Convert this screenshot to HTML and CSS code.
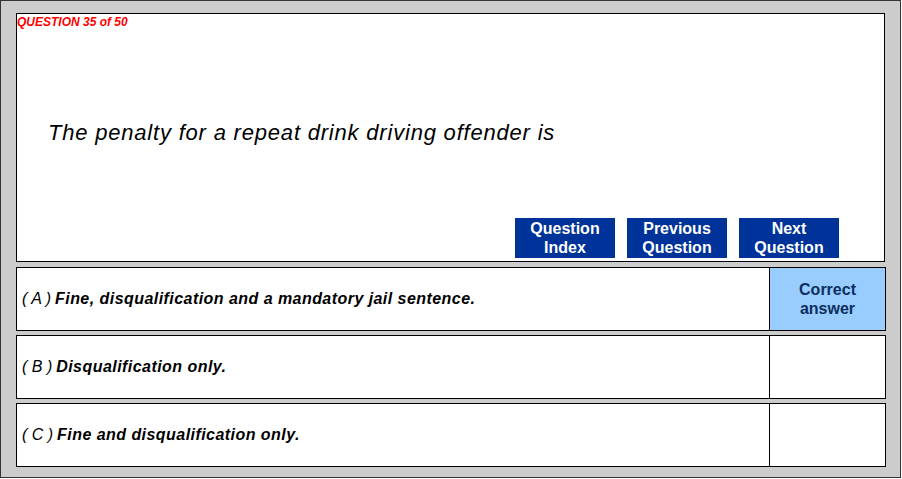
FILE: index.html
```html
<!DOCTYPE html>
<html lang="en">
<head>
    <meta charset="UTF-8">
    <title>Question 35 of 50</title>
    <link rel="stylesheet" href="styles.css">
</head>
<body>
    <div class="frame">
        <div class="question-box">
            <div class="counter">QUESTION 35 of 50</div>
            <div class="question">The penalty for a repeat drink driving offender is</div>
            <div class="nav">
                <button class="nav-btn">Question<br>Index</button>
                <button class="nav-btn">Previous<br>Question</button>
                <button class="nav-btn">Next<br>Question</button>
            </div>
        </div>

        <div class="option">
            <div class="option-text"><span class="letter">( A )</span> Fine, disqualification and a mandatory jail sentence.</div>
            <div class="option-mark correct">Correct<br>answer</div>
        </div>
        <div class="option">
            <div class="option-text"><span class="letter">( B )</span> Disqualification only.</div>
            <div class="option-mark"></div>
        </div>
        <div class="option">
            <div class="option-text"><span class="letter">( C )</span> Fine and disqualification only.</div>
            <div class="option-mark"></div>
        </div>
    </div>
</body>
</html>
```

FILE: styles.css
```css
body {
    margin: 0;
    font-family: "Liberation Sans", Arial, sans-serif;
    background: #ffffff;
}
.frame {
    box-sizing: border-box;
    width: 901px;
    height: 478px;
    padding: 12px 0 0 15px;
    background: #cccccc;
    border: 1px solid #333333;
}
.question-box {
    box-sizing: border-box;
    width: 869px;
    height: 249px;
    background: #ffffff;
    border: 1px solid #000000;
    display: flex;
    flex-direction: column;
    padding: 0 0 3px 0;
}
.counter {
    color: #ff0000;
    font-size: 12px;
    font-weight: bold;
    font-style: italic;
    padding: 1px 0 0 0;
    line-height: 14px;
}
.question {
    margin: 91px 0 0 31px;
    font-size: 22px;
    font-style: italic;
    letter-spacing: 0.8px;
    color: #000000;
}
.nav {
    margin-top: auto;
    display: flex;
    justify-content: flex-end;
    gap: 12px;
    padding-right: 45px;
}
.nav-btn {
    width: 100px;
    height: 40px;
    padding: 0;
    border: none;
    background: #003399;
    color: #ffffff;
    font-family: "Liberation Sans", Arial, sans-serif;
    font-size: 16px;
    font-weight: bold;
    line-height: 19px;
    cursor: pointer;
}
.option {
    box-sizing: border-box;
    width: 870px;
    height: 64px;
    margin-top: 4px;
    display: flex;
    background: #ffffff;
    border: 1px solid #000000;
}
.question-box + .option {
    margin-top: 5px;
}
.option-text {
    flex: 1;
    display: flex;
    align-items: center;
    gap: 4px;
    padding-left: 5px;
    font-size: 16px;
    font-weight: bold;
    font-style: italic;
    letter-spacing: 0.45px;
}
.letter {
    font-weight: normal;
    font-size: 16px;
    letter-spacing: 0;
}
.option-mark {
    width: 115px;
    border-left: 1px solid #000000;
    display: flex;
    align-items: center;
    justify-content: center;
    text-align: center;
    font-size: 16px;
    font-weight: bold;
    line-height: 19px;
    color: #0d2f5e;
}
.option-mark.correct {
    background: #99ccff;
}
```
